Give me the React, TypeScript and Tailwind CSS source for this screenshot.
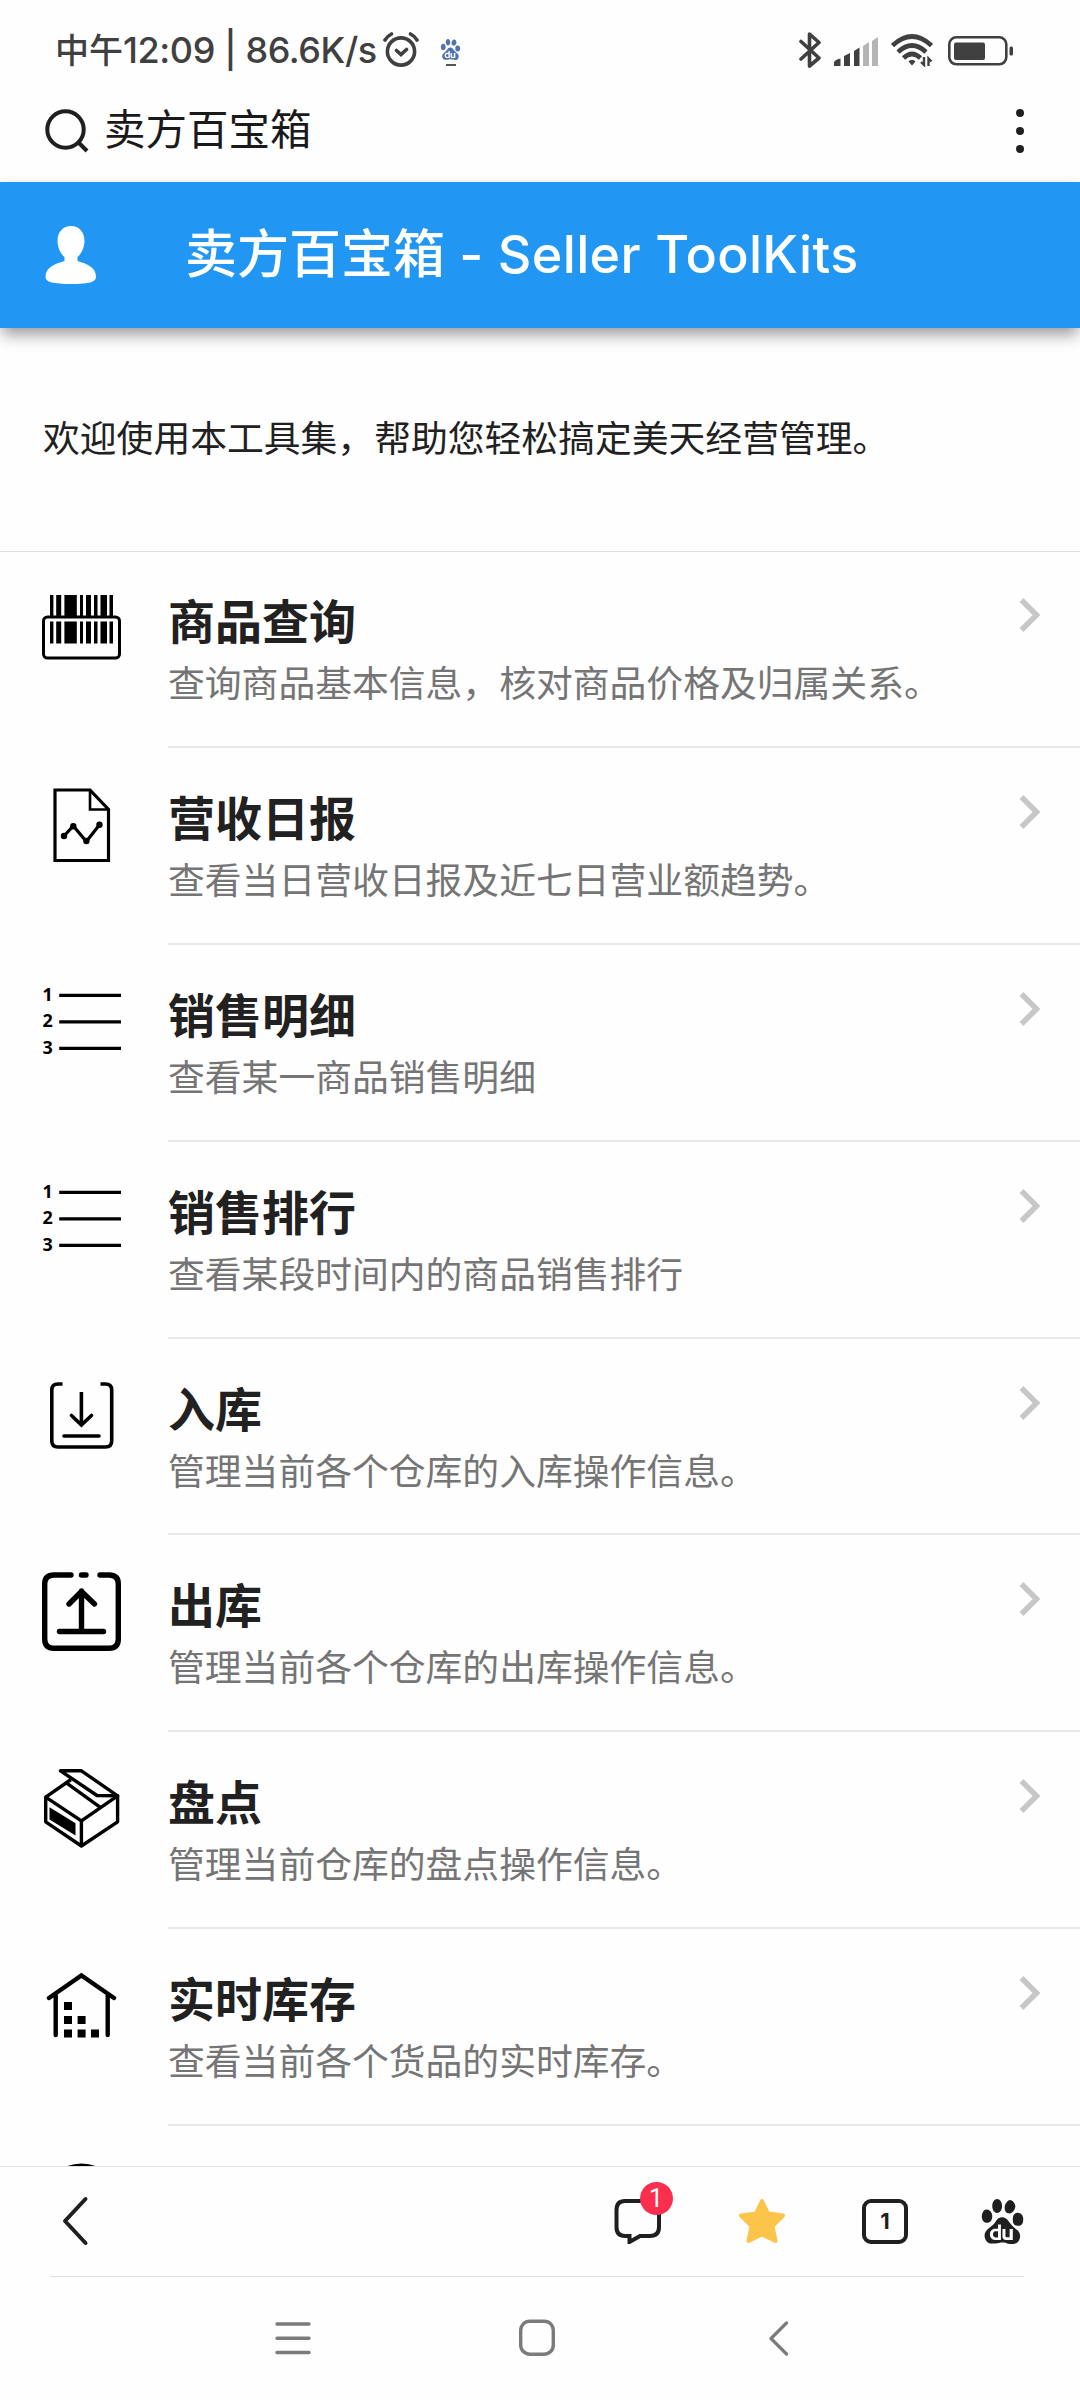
import React from 'react';
import { SiBaidu } from 'react-icons/si';

const BarcodeIcon = () => (
  <svg viewBox="0 0 79 79" className="size-[79px]">
    <rect x="1.5" y="29" width="76" height="41" rx="4" fill="none" stroke="#000" strokeWidth="3" />
    {[
      [8, 3.4],
      [14.2, 5],
      [22.4, 12.4],
      [38, 3],
      [44, 5],
      [52, 3.5],
      [58.5, 6.5],
      [67.5, 3.5],
    ].map(([x, w]) => (
      <g key={x}>
        <rect x={x} y="7" width={w} height="21" />
        <rect x={x} y="33.5" width={w} height="22" />
      </g>
    ))}
  </svg>
);

const ReportIcon = () => (
  <svg viewBox="0 0 79 79" className="size-[79px]" fill="none" stroke="#000" strokeWidth="3.2">
    <path d="M13 5H48L66.5 24.5V75.5H13Z" />
    <path d="M48 5V24.5H66.5" strokeWidth="2.6" />
    <path d="M22 51L31.3 41L44.4 56.5L57.5 39.8" />
    <g fill="#000" stroke="none">
      <circle cx="22" cy="51" r="3.2" />
      <circle cx="31.3" cy="41.2" r="3.2" />
      <circle cx="44.4" cy="56" r="3.2" />
      <circle cx="57.5" cy="39.8" r="3.2" />
    </g>
  </svg>
);

const ListIcon = () => (
  <svg viewBox="0 0 79 79" className="size-[79px]">
    <path d="M17.2 13.3H79M17.2 39.8H79M17.2 66.3H79" stroke="#000" strokeWidth="3.2" />
    <g className="font-['Noto_Sans'] text-[18px] font-bold">
      <text x="0.5" y="18.5">1</text>
      <text x="0.5" y="45">2</text>
      <text x="0.5" y="71.5">3</text>
    </g>
  </svg>
);

const InboundIcon = () => (
  <svg viewBox="0 0 79 79" className="size-[79px]" fill="none" stroke="#000" strokeWidth="3.6">
    <path d="M20.5 8H16Q9.8 8 9.8 14V65Q9.8 71 16 71H63.5Q69.7 71 69.7 65V14Q69.7 8 63.5 8H58.5" />
    <path d="M39.4 16V49" />
    <path d="M29.5 39.5L39.4 49L49.5 39.5M22 60H57" strokeLinecap="round" />
  </svg>
);

const OutboundIcon = () => (
  <svg
    viewBox="0 0 79 79"
    className="size-[79px]"
    fill="none"
    stroke="#000"
    strokeWidth="5.4"
    strokeLinecap="round"
    strokeLinejoin="round"
  >
    <path d="M29 3H12Q2.7 3 2.7 12V67Q2.7 76.3 12 76.3H67Q76.3 76.3 76.3 67V12Q76.3 3 67 3H58M39.5 3H44" />
    <path d="M39.5 19V59.5M27 32L39.5 19.5L52.5 32M17.5 59.5H61.5" />
  </svg>
);

const BoxIcon = () => (
  <svg viewBox="0 0 79 79" className="size-[79px]" fill="none" stroke="#000" strokeWidth="3.4" strokeLinejoin="round">
    <path d="M3.7 28.2L39.4 51.8L75.6 26.8V52.8L39.4 77L3.7 52.8Z" />
    <path d="M39.4 51.8V77M3.7 28.2L29 10.5M24.7 14.2L59 38.8" />
    <path d="M18.5 1.8H39.4L75.6 26.8L55 26.5Z" />
    <path d="M7.5 38.2L33.5 54.2V66.5L7.5 50.5Z" fill="#000" stroke="none" />
  </svg>
);

const WarehouseIcon = () => (
  <svg viewBox="0 0 79 79" className="size-[79px]">
    <path
      d="M7 32L39.4 9.5L72 32M13.7 29V69M65.7 29V69"
      fill="none"
      stroke="#000"
      strokeWidth="4.4"
      strokeLinecap="round"
    />
    <path d="M22 36h8v8h-8zM22 50h8v8h-8zM35.6 50h8v8h-8zM22 63.5h8v8h-8zM35.6 63.5h8v8h-8zM49 63.5h8v8h-8z" />
  </svg>
);

const CircleIcon = () => (
  <svg viewBox="0 0 79 79" className="size-[79px]">
    <circle cx="39.5" cy="39.5" r="36.5" fill="none" stroke="#000" strokeWidth="5" />
  </svg>
);

const menus = [
  { title: '商品查询', desc: '查询商品基本信息，核对商品价格及归属关系。', icon: BarcodeIcon },
  { title: '营收日报', desc: '查看当日营收日报及近七日营业额趋势。', icon: ReportIcon },
  { title: '销售明细', desc: '查看某一商品销售明细', icon: ListIcon },
  { title: '销售排行', desc: '查看某段时间内的商品销售排行', icon: ListIcon },
  { title: '入库', desc: '管理当前各个仓库的入库操作信息。', icon: InboundIcon },
  { title: '出库', desc: '管理当前各个仓库的出库操作信息。', icon: OutboundIcon },
  { title: '盘点', desc: '管理当前仓库的盘点操作信息。', icon: BoxIcon },
  { title: '实时库存', desc: '查看当前各个货品的实时库存。', icon: WarehouseIcon },
  { title: '', desc: '', icon: CircleIcon },
];

const StatusBar = () => (
  <div className="flex h-[100px] shrink-0 items-center pl-[55px] pr-[67px] text-[#404040]">
    <span className="flex w-[321px] items-baseline whitespace-pre pb-px text-[34px] font-medium leading-none">
      中午
      <span className="font-['Inter'] text-[36px] tracking-[-0.4px]">12:09 | 86.6K/s</span>
    </span>
    <svg viewBox="0 0 36 36" className="ml-[7px] size-9" fill="none" stroke="#404040" strokeWidth="3.6" strokeLinecap="round">
      <circle cx="18" cy="19.5" r="13.6" />
      <path d="M13.5 18.5L18 22.5L23.5 17.5M2 8Q4.500 4 8.500 2M34 8Q31.500 4 27.500 2" />
    </svg>
    <span className="ml-[21px] mt-1 flex flex-col items-center gap-[4px]">
      <SiBaidu size={21} color="#5274ad" />
      <i className="h-[2px] w-[10px] bg-[#555]" />
    </span>

    <svg viewBox="0 0 22 36" className="ml-auto h-9 w-[22px]" fill="none" stroke="#404040" strokeWidth="3.600" strokeLinejoin="round" strokeLinecap="round">
      <path d="M2 9.500L20 26L10.500 34V2L20 10.500L2 27" />
    </svg>
    <svg viewBox="0 0 44 29" className="ml-[13px] mt-[2px] h-[29px] w-[44px]" fill="#404040">
      <path d="M0 29V25Q2 22 6.500 21.500V29ZM10 29V19L16 16V29ZM20 29V14L25.500 10.500V29Z" />
      <path d="M29 29V9L35 5V29ZM38 29V4L44 0V29Z" fill="#b5b5b5" />
    </svg>
    <svg viewBox="0 0 42 33" className="ml-[13px] mt-px h-[33px] w-[42px]" fill="none" stroke="#404040" strokeWidth="4.600">
      <path d="M1.500 11.500Q21 -6.500 40.500 11.500M7 18Q21 5 35 18M12.500 24Q21 16 29.500 24" />
      <path d="M17.500 27.500Q21 24 24.500 27.500L21 31.500Z" fill="#404040" stroke="none" />
      <path d="M33 23V31L30 28M37.500 32V24.500L40.500 27.500" strokeWidth="2.4" />
    </svg>
    <svg viewBox="0 0 65 30" className="ml-[15px] mt-px h-[30px] w-[65px]">
      <rect x="1.300" y="1.300" width="57" height="27" rx="7" fill="none" stroke="#404040" strokeWidth="2.600" />
      <rect x="6" y="6.500" width="31" height="17.500" rx="2" fill="#404040" />
      <rect x="61.500" y="10.500" width="3.500" height="9" rx="1.500" fill="#404040" />
    </svg>
  </div>
);

const SearchBar = () => (
  <div className="flex h-[82px] shrink-0 items-center pb-[22px] pl-[45px] pr-[56px]">
    <svg viewBox="0 0 44 44" className="mt-[2px] size-11" fill="none" stroke="#1f1f1f" strokeWidth="4">
      <circle cx="20.500" cy="20.500" r="18.200" />
      <path d="M33 33L42 42" />
    </svg>
    <span className="ml-[15px] pb-[5px] text-[41.5px] leading-none text-[#1a1a1a]">卖方百宝箱</span>
    <span className="ml-auto mt-[2px] flex flex-col gap-[10px]">
      <i className="size-2 rounded-full bg-[#1f1f1f]" />
      <i className="size-2 rounded-full bg-[#1f1f1f]" />
      <i className="size-2 rounded-full bg-[#1f1f1f]" />
    </span>
  </div>
);

const ToolBar = () => (
  <div className="flex h-[110px] shrink-0 items-center border-t border-[#e0e0e0] pb-px pl-[62px] pr-[56px]">
    <svg viewBox="0 0 28 50" className="h-[50px] w-[28px]" fill="none" stroke="#1f1f1f" strokeWidth="4" strokeLinecap="round" strokeLinejoin="round">
      <path d="M23.500 3L3 25L23.500 47" />
    </svg>
    <div className="relative ml-[524px]">
      <svg viewBox="0 0 47 46" className="h-[46px] w-[47px]" fill="none" stroke="#1f1f1f" strokeWidth="4">
        <path d="M11 3H36Q45 3 45 12V29Q45 38 36 38H26L15.500 44V38H11Q2.500 38 2.500 29V12Q2.500 3 11 3Z" />
      </svg>
      <span className="absolute -top-[16px] left-[26px] flex size-[33px] items-center justify-center rounded-full bg-[#fa2f4e] pr-px font-['Roboto'] text-[25px] leading-none text-white">
        1
      </span>
    </div>
    <svg viewBox="0 0 48 46" className="ml-[77px] h-[46px] w-[48px]" fill="#fcc54a" stroke="#fcc54a" strokeWidth="4" strokeLinejoin="round">
      <path d="M24 3L30 15.500L45 17.500L34.500 28L37.500 43L24 36.500L10.500 43L13.500 28L3 17.500L18 15.500Z" />
    </svg>
    <span className="ml-[76px] flex h-[45px] w-[46px] items-center justify-center rounded-[9px] border-4 border-[#1f1f1f] font-['Inter'] text-[22px] font-bold leading-none text-[#1f1f1f]">
      1
    </span>
    <SiBaidu size={45} color="#1f1f1f" className="-mr-px ml-auto" />
  </div>
);

const NavBar = () => (
  <div className="ml-[50px] mr-[56px] flex h-[124px] shrink-0 items-start border-t border-[#e0e0e0] pl-[225px] pt-[42px]">
    <svg viewBox="0 0 36 38" className="h-[38px] w-[36px]" stroke="#7b7b7b" strokeWidth="3.400" strokeLinecap="round">
      <path d="M2 5H34M2 19.300H34M2 33.500H34" />
    </svg>
    <svg viewBox="0 0 36 38" className="ml-[208px] h-[38px] w-[36px]" fill="none" stroke="#7b7b7b" strokeWidth="3.400">
      <rect x="1.700" y="2.200" width="32.600" height="33" rx="9" />
    </svg>
    <svg viewBox="0 0 20 38" className="ml-[214px] h-[38px] w-[20px]" fill="none" stroke="#7b7b7b" strokeWidth="3.200" strokeLinecap="round" strokeLinejoin="round">
      <path d="M17.500 4L2 19.500L17.500 35" />
    </svg>
  </div>
);

export default function App() {
  return (
    <div className="flex h-[2400px] w-[1080px] flex-col overflow-hidden bg-[#fefefe] font-['Noto_Sans_CJK_SC',sans-serif]">
      <StatusBar />
      <SearchBar />

      <header className="z-10 flex h-[146px] shrink-0 items-center bg-[#2196f3] pl-[45px] text-white shadow-[0_8px_15px_-2px_rgba(0,0,0,0.42)]">
        <svg viewBox="0 0 52 58" className="h-[58px] w-[52px]" fill="#fff">
          <path d="M26 0C34 0 39.500 6 39.500 15C39.500 22 36 28 32.500 31V35C42 38 51 41 51 51C51 56 44 58 26 58C8 58 0.500 56 0.500 51C0.500 41 10 38 19.500 35V31C16 28 12.500 22 12.500 15C12.500 6 18 0 26 0Z" />
        </svg>
        <h1 className="ml-[88px] whitespace-pre pb-[4px] text-[52px] font-medium leading-none">
          卖方百宝箱
          <span className="font-['Inter'] tracking-[0.35px]"> - Seller ToolKits</span>
        </h1>
      </header>

      <p className="flex h-[223px] shrink-0 items-center pb-[6px] pl-[43px] text-[36.8px] leading-none text-[#212121]">
        欢迎使用本工具集，帮助您轻松搞定美天经营管理。
      </p>

      <ul className="min-h-0 flex-1 overflow-hidden border-t border-[#dedede]">
        {menus.map((item, i) => (
          <li key={i} className="flex h-[196.875px] pl-[42px] first:-mt-px">
            <div className="w-[126px] shrink-0 pt-[37px]">
              <item.icon />
            </div>
            <div className="flex flex-1 border-b-2 border-[#e8e8e8] pt-[47px]">
              <div className="flex-1">
                <h2 className="-mt-[4px] text-[47px] font-bold leading-[50px] text-[#212121]">{item.title}</h2>
                <p className="mt-[18px] text-[36.8px] leading-[38px] text-[#757575]">{item.desc}</p>
              </div>
              <svg viewBox="0 0 22 34" className="mr-[39px] h-[34px] w-[22px]" fill="none" stroke="#c7c7c7" strokeWidth="5.500">
                <path d="M2.500 2L17.500 17L2.500 32" />
              </svg>
            </div>
          </li>
        ))}
      </ul>

      <ToolBar />
      <NavBar />
    </div>
  );
}
